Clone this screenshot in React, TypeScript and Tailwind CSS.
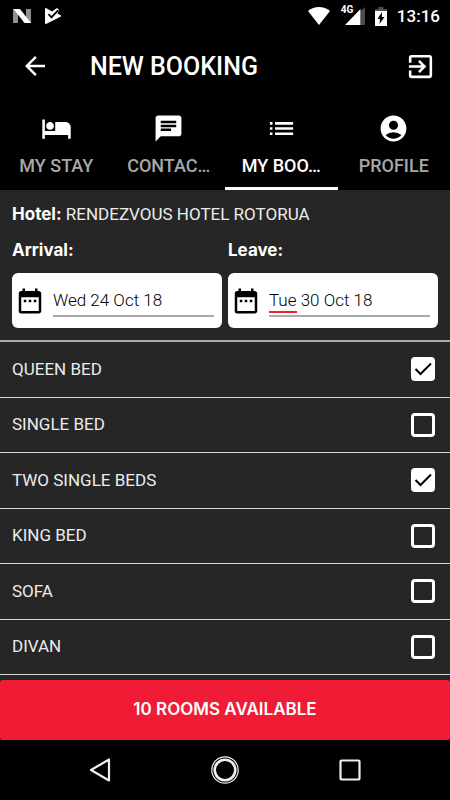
import { useState } from "react";
import type { ReactNode } from "react";
import {
  MdAccountCircle,
  MdArrowBack,
  MdChat,
  MdDateRange,
  MdExitToApp,
  MdHotel,
  MdList,
} from "react-icons/md";

const tabs = [
  { label: "MY STAY", Icon: MdHotel },
  { label: "CONTAC…", Icon: MdChat },
  { label: "MY BOO…", Icon: MdList },
  { label: "PROFILE", Icon: MdAccountCircle },
];

const beds = [
  { name: "QUEEN BED", checked: true },
  { name: "SINGLE BED", checked: false },
  { name: "TWO SINGLE BEDS", checked: true },
  { name: "KING BED", checked: false },
  { name: "SOFA", checked: false },
  { name: "DIVAN", checked: false },
];

function StatusBar() {
  return (
    <div className="flex h-8 items-center justify-between pl-3 pr-2.5">
      <div className="flex items-center gap-3">
        <svg className="h-4 w-5" viewBox="0 0 20 16" aria-hidden="true">
          <path d="M1 1h5v14H1zM14 1h5v14h-5z" fill="#8f8f8f" />
          <path d="M1.500 1H8l11 14h-6.500z" fill="#fff" />
        </svg>
        <svg className="size-[18px]" viewBox="0 0 18 18" aria-hidden="true">
          <path d="M1 1.500 2 1l6 3.500L13 1l2 2-1.500 3.500L17 8.500v1L2 17l-1-.5z" fill="#fff" />
          <path d="m4.500 7.200 3 3.200 6.500-7" fill="none" stroke="#000" strokeWidth="1.800" />
        </svg>
      </div>
      <div className="flex items-center">
        <svg className="h-[18px] w-[22px]" viewBox="0 0 22 18" aria-hidden="true">
          <path d="M0 4C6-1.300 16-1.300 22 4L11 18z" fill="#fff" />
        </svg>
        <div className="relative ml-[15px] h-[18px] w-5">
          <svg className="h-[18px] w-5" viewBox="0 0 20 18" aria-hidden="true">
            <path d="M16 4l4-4v18h-4z" fill="#4d4d4d" />
            <path d="M0 18 15.500 2v16z" fill="#fff" />
          </svg>
          <span className="absolute -left-1 -top-0.5 text-[10px] font-bold leading-none">4G</span>
        </div>
        <svg className="ml-2.5 h-[19px] w-3" viewBox="0 0 12 19" aria-hidden="true">
          <path d="M3.500 0h5v2H12v3H0V2h3.500z" fill="#4d4d4d" />
          <path d="M0 4h12v15H0z" fill="#fff" />
          <path d="M7 5 2.500 12H5l-.5 5L9.500 10H6.800z" fill="#000" />
        </svg>
        <span className="ml-2.5 text-[17px] font-medium leading-none">13:16</span>
      </div>
    </div>
  );
}

function DateField({
  id,
  label,
  initial,
  children,
}: {
  id: string;
  label: string;
  initial: string;
  children?: ReactNode;
}) {
  const [value, setValue] = useState(initial);
  return (
    <div className="min-w-0 flex-1">
      <label htmlFor={id} className="block font-['Inter',sans-serif] text-[17px] font-bold leading-6">
        {label}
      </label>
      <div className="mt-[11px] flex h-[55px] items-center rounded-md bg-white pl-[3px] pr-2 text-black">
        <MdDateRange className="size-[30px] shrink-0" />
        <div className="relative ml-2 mt-1 h-7 min-w-0 flex-1 border-b-2 border-[#aaa]">
          <input
            id={id}
            type="text"
            spellCheck={false}
            value={value}
            onChange={(e) => setValue(e.target.value)}
            className="block h-6 w-full bg-transparent text-[17px] font-light outline-none"
          />
          {children}
        </div>
      </div>
    </div>
  );
}

function BedRow({ name, initial }: { name: string; initial: boolean }) {
  const [checked, setChecked] = useState(initial);
  return (
    <li className="flex flex-1 border-b border-[#d5d5d5]">
      <label className="flex min-h-12 flex-1 items-center justify-between pl-3 pr-[15px] text-[17px] text-[#ececec]">
        {name}
        <span className="relative size-6">
          <input
            type="checkbox"
            checked={checked}
            onChange={() => setChecked(!checked)}
            className="peer block size-6 appearance-none rounded-[4px] border-[3px] border-white checked:bg-white"
          />
          <svg
            className="pointer-events-none absolute inset-0 hidden size-6 peer-checked:block"
            viewBox="0 0 24 24"
            aria-hidden="true"
          >
            <path d="m4.500 12 5 5L20 6.500" fill="none" stroke="#000" strokeWidth="2" />
          </svg>
        </span>
      </label>
    </li>
  );
}

export default function App() {
  const [active, setActive] = useState(2);
  return (
    <div className="flex min-h-screen flex-col bg-[#262626] font-['Roboto',sans-serif] text-white">
      <header className="bg-black">
        <StatusBar />
        <div className="flex h-[68px] items-center pl-5 pr-[14px]">
          <button type="button" aria-label="Back">
            <MdArrowBack className="size-[30px]" />
          </button>
          <h1 className="ml-10 flex-1 pt-0.5 text-[25px] font-medium leading-8">NEW BOOKING</h1>
          <button type="button" aria-label="Sign out">
            <MdExitToApp className="size-[31px]" />
          </button>
        </div>
        <nav className="grid h-[90px] grid-cols-4">
          {tabs.map(({ label, Icon }, i) => (
            <button
              key={label}
              type="button"
              onClick={() => setActive(i)}
              className={
                i === active
                  ? "flex flex-col items-center border-b-[3px] border-white pt-[13px]"
                  : "flex flex-col items-center border-b-[3px] border-black pt-[13px] text-[#a8a8a8]"
              }
            >
              <Icon className="size-[31px] text-white" />
              <span className="mt-2.5 text-lg font-medium leading-6">{label}</span>
            </button>
          ))}
        </nav>
      </header>

      <main className="flex flex-1 flex-col">
        <section className="border-b-2 border-[#aaa] px-3 pb-3 pt-3">
          <p className="text-[17px] leading-6 text-[#ececec]">
            <b className="font-['Inter',sans-serif] font-bold text-white">Hotel:</b> RENDEZVOUS HOTEL ROTORUA
          </p>
          <div className="mt-3 flex gap-1.5">
            <DateField id="arrival" label="Arrival:" initial="Wed 24 Oct 18" />
            <DateField id="leave" label="Leave:" initial="Tue 30 Oct 18">
              <span className="absolute bottom-0.5 left-0 h-0.5 w-7 bg-[#f0202c]" />
            </DateField>
          </div>
        </section>
        <ul className="mb-[5px] flex flex-1 flex-col">
          {beds.map((bed) => (
            <BedRow key={bed.name} name={bed.name} initial={bed.checked} />
          ))}
        </ul>
      </main>

      <button
        type="button"
        className="h-[60px] rounded-[3px] bg-[#f01c35] font-['Inter',sans-serif] text-[17px] font-semibold"
      >
        10 ROOMS AVAILABLE
      </button>

      <footer className="grid h-[60px] grid-cols-3 bg-black px-[37px]">
        <button type="button" aria-label="Back key" className="flex items-center justify-center">
          <svg className="size-7" viewBox="0 0 28 28" fill="none" stroke="#eee" strokeWidth="2.200" strokeLinejoin="round" aria-hidden="true">
            <path d="M23 3.500v21L5 14z" />
          </svg>
        </button>
        <button type="button" aria-label="Home key" className="flex items-center justify-center">
          <svg className="size-7" viewBox="0 0 28 28" fill="none" stroke="#eee" aria-hidden="true">
            <circle cx="14" cy="14" r="13.200" strokeWidth="1.200" />
            <circle cx="14" cy="14" r="10.300" strokeWidth="2.600" />
          </svg>
        </button>
        <button type="button" aria-label="Recent apps key" className="flex items-center justify-center">
          <svg className="size-7" viewBox="0 0 28 28" fill="none" stroke="#eee" strokeWidth="2.200" aria-hidden="true">
            <rect x="4.500" y="4.500" width="19" height="19" rx="1" />
          </svg>
        </button>
      </footer>
    </div>
  );
}
